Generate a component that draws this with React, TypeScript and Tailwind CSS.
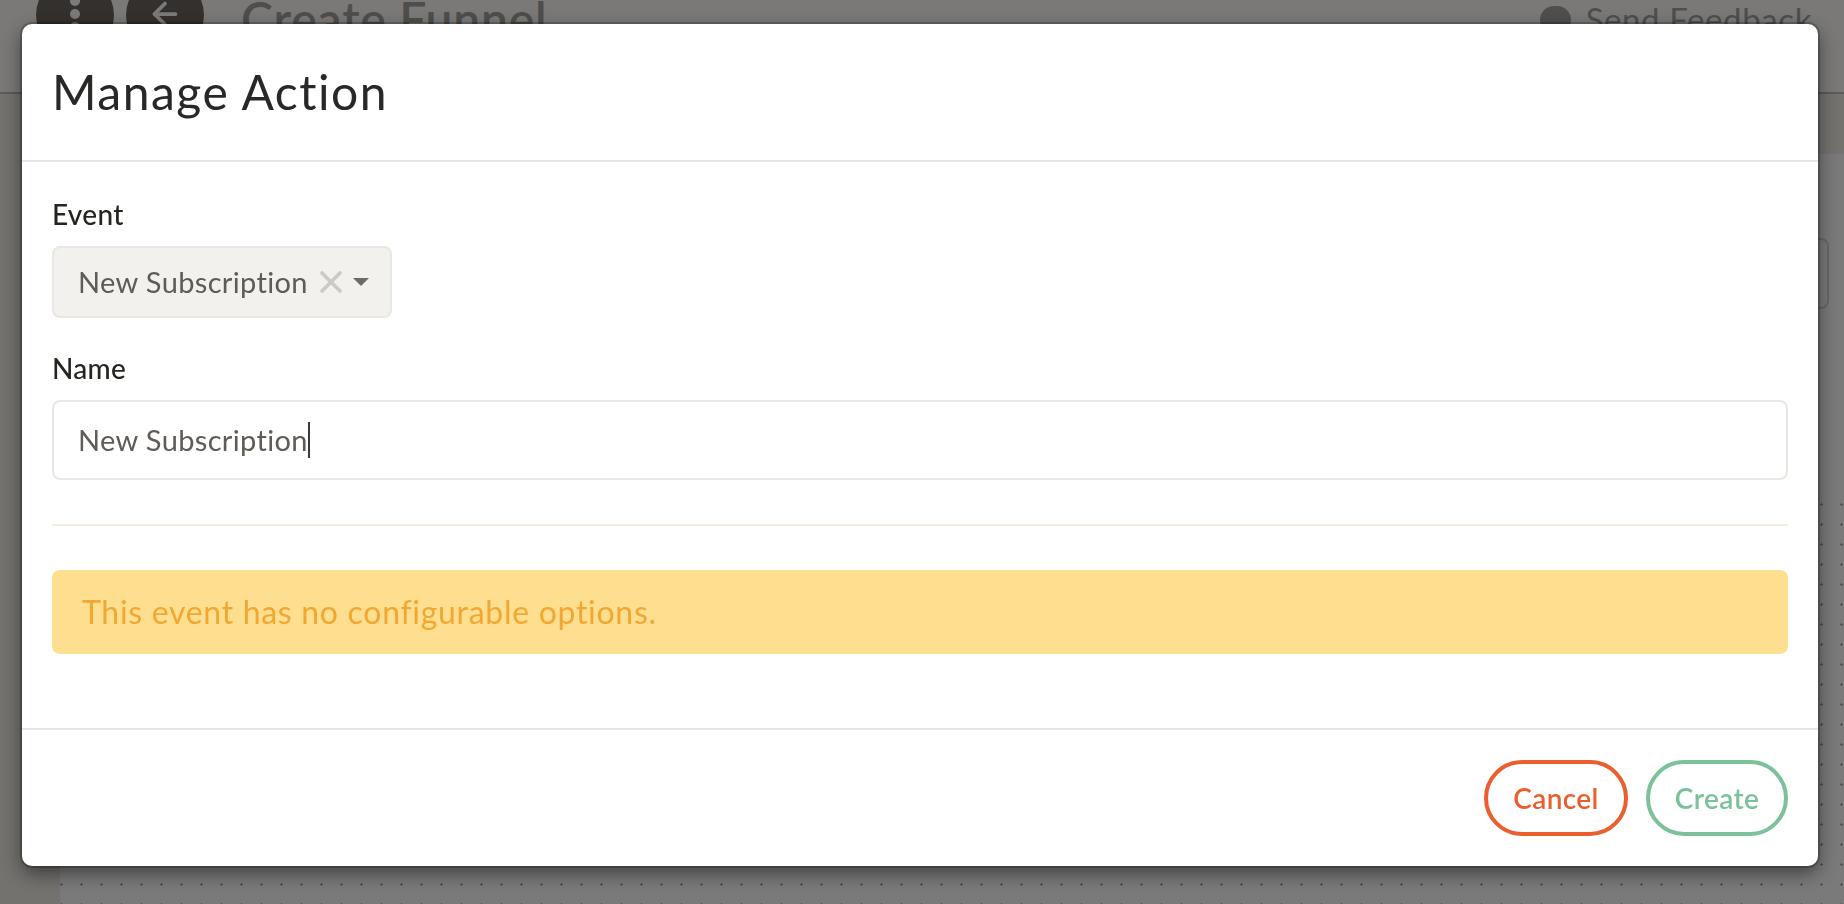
import { ArrowLeft, X } from 'lucide-react'

const fontStack = "font-['Lato','Noto_Sans',sans-serif]"

function BackgroundPage() {
  return (
    <div className="flex h-[904px] flex-col overflow-hidden bg-[#f5f5f5]">
      <header className="flex h-[94px] shrink-0 items-start border-b-2 border-[#b8b6b2] bg-[#f4f3ef]">
        <div className="ml-[36px] -mt-[24px] flex h-[78px] w-[78px] flex-col items-center justify-center gap-[3px] rounded-full bg-[#66605a] pb-[2px]">
          <span className="h-[10px] w-[10px] rounded-full bg-[#f8f6f2]" />
          <span className="h-[10px] w-[10px] rounded-full bg-[#f8f6f2]" />
          <span className="h-[10px] w-[10px] rounded-full bg-[#f8f6f2]" />
        </div>
        <div className="ml-[12px] -mt-[24px] flex h-[78px] w-[78px] items-center justify-center rounded-full bg-[#66605a] pb-[2px]">
          <ArrowLeft size={36} strokeWidth={2.5} className="text-[#f8f6f2]" />
        </div>
        <h1 className="ml-[37px] mt-[1px] text-[48px] leading-[36px] font-semibold tracking-[0.8px] text-[#9e9c98]">
          Create Funnel
        </h1>
        <div className="ml-auto mr-[32px] flex items-start gap-[15px]">
          <span className="mt-[6px] h-[28px] w-[31px] rounded-full bg-[#a09e9a]" />
          <span className="text-[33px] leading-[38px] tracking-[0.6px] text-[#9e9c98]">Send Feedback</span>
        </div>
      </header>
      <div className="flex min-h-0 flex-1">
        <aside className="w-[60px] shrink-0 bg-[#e6e4de]" />
        <main className="flex min-w-0 flex-1 flex-col">
          <div className="h-[60px] shrink-0 bg-[#e6e4de]" />
          <div className="flex h-[340px] shrink-0 justify-end pt-[84px] pr-[15px]">
            <div className="h-[71px] w-[300px] rounded-[8px] border-2 border-[#d0ced4]" />
          </div>
          <div className="flex-1 bg-[radial-gradient(circle_at_1.5px_10.5px,#a0a0a0_1.2px,transparent_1.2px)] bg-size-[20px_20px]" />
        </main>
      </div>
    </div>
  )
}

function ManageActionModal() {
  return (
    <div className="fixed inset-0 z-50 bg-black/50 pt-[24px] pl-[22px]" role="presentation">
      <div
        className="flex h-[842px] w-[1796px] flex-col rounded-[10px] bg-white shadow-[0_0_0_2px_rgba(0,0,0,0.2),0_7px_20px_rgba(0,0,0,0.5)]"
        role="dialog"
        aria-modal="true"
        aria-labelledby="manage-action-title"
      >
        <div className="flex h-[138px] shrink-0 items-center border-b-2 border-[#e6e6e6] px-[30px]">
          <h3 id="manage-action-title" className="text-[48px] leading-[60px] tracking-[1.5px] text-[#292826]">
            Manage Action
          </h3>
        </div>
        <div className="px-[30px]">
          <label className="mt-[36px] mb-[16px] block text-[28px] leading-[32px] font-medium tracking-[0.3px] text-[#26241f]">
            Event
          </label>
          <div className="flex h-[72px] w-[340px] items-center rounded-[8px] border-2 border-[#e8e7e2] bg-[#f2f1ed] pl-[24px] text-[#5f5b55]">
            <span className="text-[29px] leading-[36px] tracking-[0.35px]">New Subscription</span>
            <X size={36} strokeWidth={2.5} className="ml-[5px] shrink-0 text-[#cbcac6]" />
            <span className="ml-[4px] h-0 w-0 border-x-[8px] border-t-[8px] border-x-transparent border-t-[#6f6a64]" />
          </div>
          <label className="mt-[34px] mb-[16px] block text-[28px] leading-[32px] font-medium tracking-[0.3px] text-[#26241f]">
            Name
          </label>
          <div
            className="flex h-[80px] items-center rounded-[8px] border-2 border-[#e8e7e2] bg-white pl-[24px] text-[#5f5b55]"
            role="textbox"
          >
            <span className="text-[29px] leading-[36px] tracking-[0.35px]">New Subscription</span>
            <span className="h-[36px] w-[2px] bg-[#3b3935]" />
          </div>
          <hr className="mt-[44px] border-t-2 border-[#f2ece2]" />
          <div className="mt-[44px] flex h-[84px] items-center rounded-[8px] bg-[#fedf8f] px-[30px]">
            <p className="text-[32px] leading-[40px] tracking-[0.7px] text-[#f3a733]">
              This event has no configurable options.
            </p>
          </div>
        </div>
        <div className="mt-auto flex h-[138px] shrink-0 items-start justify-end gap-[18px] border-t-2 border-[#e6e6e6] pt-[30px] pr-[30px]">
          <button
            type="button"
            className="h-[76px] w-[144px] rounded-full border-4 border-[#ea5f2e] text-[28px] font-semibold tracking-[0.4px] text-[#ea5f2e]"
          >
            Cancel
          </button>
          <button
            type="button"
            className="h-[76px] w-[142px] rounded-full border-4 border-[#7bc29a] text-[28px] font-semibold tracking-[0.4px] text-[#7bc29a]"
          >
            Create
          </button>
        </div>
      </div>
    </div>
  )
}

export default function App() {
  return (
    <div className={fontStack}>
      <BackgroundPage />
      <ManageActionModal />
    </div>
  )
}
